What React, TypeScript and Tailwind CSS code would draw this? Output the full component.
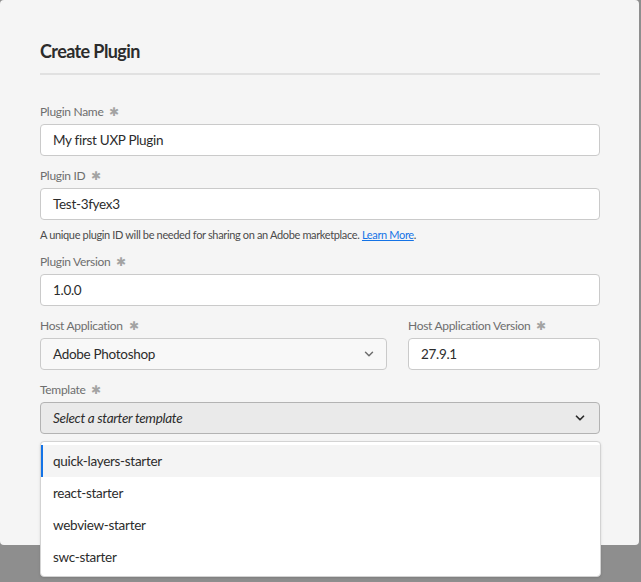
import { ChevronDown } from "lucide-react";

const font = { fontFamily: "Lato, 'Noto Sans', sans-serif" };

function Label({ text }: { text: string }) {
  return (
    <div className="flex items-center h-[24px] text-[12px] tracking-[-0.3px] text-[#6e6e6e]">
      <span>{text}</span>
      <span className="ml-[6px] text-[12px] text-[#a3a3a3]">✱</span>
    </div>
  );
}

function TextField({ value }: { value: string }) {
  return (
    <div className="h-[32px] flex items-center px-[12px] bg-white border border-[#cacaca] rounded-[4px] text-[13.5px] tracking-[-0.3px] text-[#2c2c2c]">
      {value}
    </div>
  );
}

const templates = ["quick-layers-starter", "react-starter", "webview-starter", "swc-starter"];

export default function App() {
  return (
    <div className="relative w-[641px] h-[582px] bg-[#8e8e8e] overflow-hidden" style={font}>
      <div className="w-[639px] h-[545px] bg-[#f5f5f5] rounded-[4px] pl-[40px] pr-[39px] pt-[39px]">
        <h1 className="text-[18px] font-bold tracking-[-0.6px] text-[#2c2c2c] leading-[24px]">Create Plugin</h1>
        <div className="mt-[10px] h-[2px] bg-[#e1e1e1]" />

        <div className="mt-[25px]">
          <Label text="Plugin Name" />
          <TextField value="My first UXP Plugin" />
        </div>

        <div className="mt-[8px]">
          <Label text="Plugin ID" />
          <TextField value="Test-3fyex3" />
          <div className="h-[30px] flex items-center text-[11px] tracking-[-0.35px] text-[#4b4b4b]">
            <span>
              A unique plugin ID will be needed for sharing on an Adobe marketplace.{" "}
              <a className="text-[#1473e6] underline">Learn More</a>.
            </span>
          </div>
        </div>

        <div>
          <Label text="Plugin Version" />
          <TextField value="1.0.0" />
        </div>

        <div className="mt-[8px] flex gap-[21px]">
          <div className="w-[347px]">
            <Label text="Host Application" />
            <div className="h-[32px] flex items-center justify-between pl-[12px] pr-[10px] bg-[#f8f8f8] border border-[#cacaca] rounded-[4px] text-[13.5px] tracking-[-0.3px] text-[#2c2c2c]">
              <span>Adobe Photoshop</span>
              <ChevronDown className="w-[14px] h-[14px] text-[#6e6e6e]" strokeWidth={2.5} />
            </div>
          </div>
          <div className="flex-1">
            <Label text="Host Application Version" />
            <TextField value="27.9.1" />
          </div>
        </div>

        <div className="mt-[8px]">
          <Label text="Template" />
          <div className="h-[32px] flex items-center justify-between pl-[12px] pr-[12px] bg-[#eaeaea] border border-[#b3b3b3] rounded-[4px] text-[13.5px] tracking-[-0.3px] text-[#2c2c2c]">
            <span className="italic">Select a starter template</span>
            <ChevronDown className="w-[14px] h-[14px] text-[#2c2c2c]" strokeWidth={3} />
          </div>
        </div>
      </div>

      <div className="absolute left-[40px] top-[441px] w-[561px] bg-white border border-[#d3d3d3] rounded-[4px] py-[3px] shadow-sm">
        {templates.map((t, i) => (
          <div
            key={t}
            className={
              i === 0
                ? "h-[32px] flex items-center pl-[10px] border-l-2 border-[#1473e6] bg-[#f4f4f4] text-[13.5px] tracking-[-0.3px] text-[#2c2c2c]"
                : "h-[32px] flex items-center pl-[12px] text-[13.5px] tracking-[-0.3px] text-[#2c2c2c]"
            }
          >
            {t}
          </div>
        ))}
      </div>
    </div>
  );
}
